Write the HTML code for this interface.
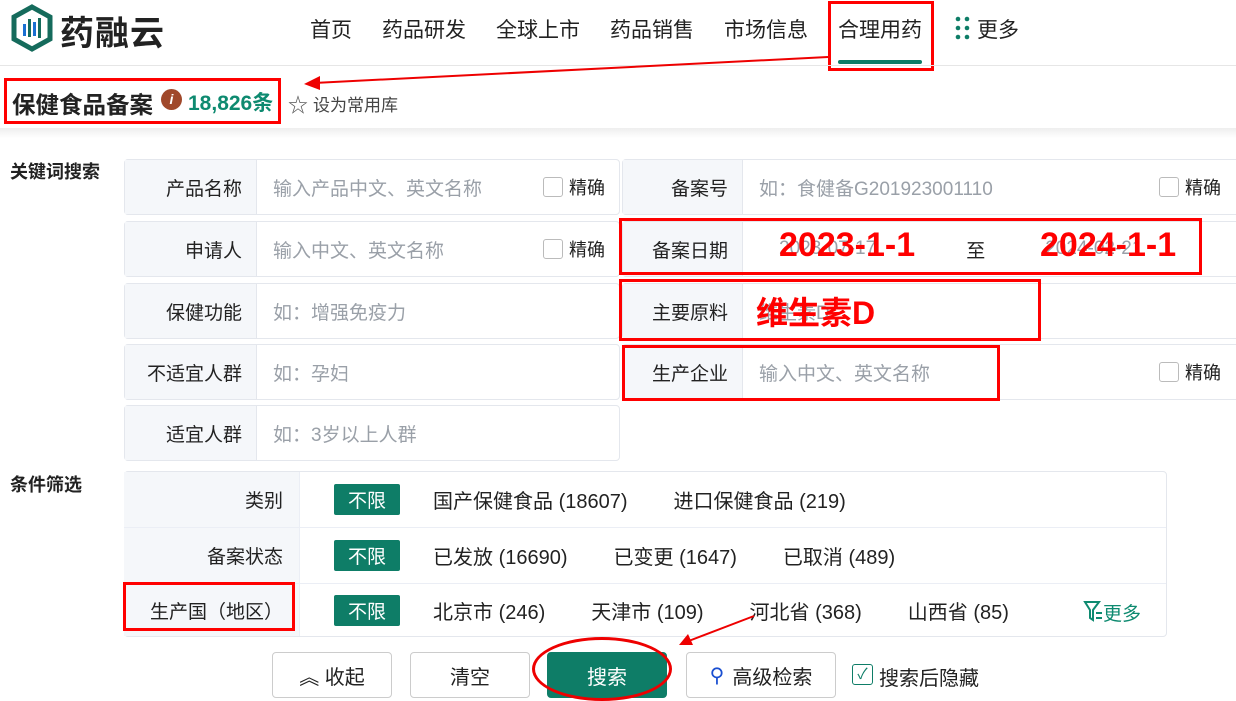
<!DOCTYPE html>
<html><head><meta charset="utf-8"><style>
*{margin:0;padding:0;box-sizing:border-box}
body{width:1236px;height:698px;overflow:hidden;background:#fff;font-family:"Liberation Sans","Noto Sans CJK SC",sans-serif;color:#222;position:relative}
.a{position:absolute}
.nav{font-size:21px;color:#222;top:14px}
.lbl{background:#f5f7fa;border-right:1px solid #e4e7ed;text-align:right;padding-right:14px;font-size:19px;display:flex;align-items:center;justify-content:flex-end}
.row{position:absolute;border:1px solid #e4e7ed;border-radius:4px;display:flex;background:#fff}
.ph{color:#9aa0a8;font-size:19px;padding-left:16px;display:flex;align-items:center;flex:1}
.chk{display:flex;align-items:center;font-size:18px;padding-right:14px}
.chk i{display:inline-block;width:20px;height:20px;border:1px solid #bbb;border-radius:3px;margin-right:6px}
.red{position:absolute;border:3px solid #f00}
.frow{position:absolute;left:124px;width:1042px;display:flex;border-bottom:1px solid #ebeef5}
.flbl{width:176px;background:#f5f7fa;border-right:1px solid #ebeef5;display:flex;align-items:center;justify-content:flex-end;padding-right:16px;font-size:19px}
.opts{display:flex;align-items:center;padding-left:34px;font-size:20px;gap:0}
.opts span{margin-right:46px}
.tag{background:#0e7d67;color:#fff;padding:2px 14px;border-radius:2px;margin-right:33px!important;font-size:19px}
.btn{position:absolute;top:652px;height:46px;border:1px solid #ccc;border-radius:4px;display:flex;align-items:center;justify-content:center;font-size:20px;background:#fff}
.big{position:absolute;color:#f00;font-weight:bold;font-size:34px}
</style></head><body>
<svg class="a" style="left:10px;top:4px" width="44" height="48" viewBox="0 0 44 48"><path d="M22 3 L40 13 L40 35 L22 45 L4 35 L4 13 Z" fill="none" stroke="#156b5c" stroke-width="5"/><rect x="13" y="20" width="3" height="12" fill="#1a6fd1"/><rect x="18" y="15" width="3" height="18" fill="#156b5c"/><rect x="23" y="18" width="3" height="14" fill="#1a6fd1"/><rect x="28" y="14" width="3" height="20" fill="#156b5c"/></svg>
<div class="a" style="left:60px;top:6px;font-size:34px;font-weight:bold;color:#222;letter-spacing:1px">药融云</div>
<div class="a nav" style="left:310px">首页</div>
<div class="a nav" style="left:382px">药品研发</div>
<div class="a nav" style="left:496px">全球上市</div>
<div class="a nav" style="left:610px">药品销售</div>
<div class="a nav" style="left:724px">市场信息</div>
<div class="a nav" style="left:838px">合理用药</div>
<div class="a" style="left:838px;top:60px;width:84px;height:4px;background:#0e7d67;border-radius:2px"></div>
<div class="red" style="left:828px;top:1px;width:106px;height:70px"></div>
<svg class="a" style="left:955px;top:16px" width="16" height="24"><g fill="#0e7d67"><circle cx="3" cy="3" r="2.3"/><circle cx="12" cy="3" r="2.3"/><circle cx="3" cy="12" r="2.3"/><circle cx="12" cy="12" r="2.3"/><circle cx="3" cy="21" r="2.3"/><circle cx="12" cy="21" r="2.3"/></g></svg>
<div class="a nav" style="left:977px">更多</div>
<div class="a" style="left:0;top:65px;width:1236px;height:1px;background:#e6e6e6"></div>
<svg class="a" style="left:300px;top:50px" width="530" height="45"><line x1="528" y1="7" x2="14" y2="33" stroke="#e00" stroke-width="2"/><path d="M4 34 L20 26 L20 40 Z" fill="#e00"/></svg>
<div class="a" style="left:12px;top:86px;font-size:23.5px;font-weight:bold">保健食品备案</div>
<div class="a" style="left:161px;top:89px;width:21px;height:21px;border-radius:50%;background:#a0482a;color:#fff;font-size:14px;font-weight:bold;text-align:center;line-height:21px;font-style:italic">i</div>
<div class="a" style="left:188px;top:87px;font-size:21px;font-weight:bold;color:#0e8a70">18,826条</div>
<div class="red" style="left:4px;top:78px;width:277px;height:46px"></div>
<div class="a" style="left:288px;top:89px;font-size:20px;color:#555">☆</div>
<div class="a" style="left:313px;top:91px;font-size:17px;color:#444">设为常用库</div>
<div class="a" style="left:0;top:128px;width:1236px;height:10px;background:linear-gradient(#eee,#fff)"></div>
<div class="a" style="left:10px;top:158px;font-size:18px;font-weight:bold">关键词搜索</div>
<div class="row" style="left:124px;top:159px;width:496px;height:56px"><div class="lbl" style="width:132px">产品名称</div><div class="ph">输入产品中文、英文名称</div><div class="chk"><i></i>精确</div></div>
<div class="row" style="left:124px;top:221px;width:496px;height:56px"><div class="lbl" style="width:132px">申请人</div><div class="ph">输入中文、英文名称</div><div class="chk"><i></i>精确</div></div>
<div class="row" style="left:124px;top:283px;width:496px;height:56px"><div class="lbl" style="width:132px">保健功能</div><div class="ph">如：增强免疫力</div></div>
<div class="row" style="left:124px;top:344px;width:496px;height:56px"><div class="lbl" style="width:132px">不适宜人群</div><div class="ph">如：孕妇</div></div>
<div class="row" style="left:124px;top:405px;width:496px;height:56px"><div class="lbl" style="width:132px">适宜人群</div><div class="ph">如：3岁以上人群</div></div>
<div class="row" style="left:622px;top:159px;width:630px;height:56px"><div class="lbl" style="width:120px">备案号</div><div class="ph">如：食健备G201923001110</div><div class="chk" style="padding-right:30px"><i></i>精确</div></div>
<div class="row" style="left:622px;top:221px;width:630px;height:56px"><div class="lbl" style="width:120px">备案日期</div><div class="ph"><span style="margin-left:20px">2023-07-17</span><span style="margin-left:90px;color:#222">至</span><span style="margin-left:60px">2024-02-21</span></div></div>
<div class="row" style="left:622px;top:283px;width:630px;height:56px"><div class="lbl" style="width:120px">主要原料</div><div class="ph">维生素D</div></div>
<div class="row" style="left:622px;top:344px;width:630px;height:56px"><div class="lbl" style="width:120px">生产企业</div><div class="ph">输入中文、英文名称</div><div class="chk" style="padding-right:30px"><i></i>精确</div></div>
<div class="red" style="left:619px;top:218px;width:583px;height:57px"></div>
<div class="red" style="left:619px;top:279px;width:422px;height:62px"></div>
<div class="red" style="left:622px;top:345px;width:378px;height:56px"></div>
<div class="big" style="left:779px;top:226px">2023-1-1</div>
<div class="big" style="left:1040px;top:226px">2024-1-1</div>
<div class="big" style="left:756px;top:288px;font-size:32px">维生素D</div>
<div class="a" style="left:10px;top:471px;font-size:18px;font-weight:bold">条件筛选</div>
<div class="a" style="left:124px;top:471px;width:1043px;height:166px;border:1px solid #e4e7ed;border-radius:4px"></div>
<div class="frow" style="top:472px;height:56px"><div class="flbl">类别</div><div class="opts"><span class="tag">不限</span><span>国产保健食品 (18607)</span><span>进口保健食品 (219)</span></div></div>
<div class="frow" style="top:528px;height:56px"><div class="flbl">备案状态</div><div class="opts"><span class="tag">不限</span><span>已发放 (16690)</span><span>已变更 (1647)</span><span>已取消 (489)</span></div></div>
<div class="frow" style="top:584px;height:52px;border:none"><div class="flbl">生产国（地区）</div><div class="opts"><span class="tag">不限</span><span>北京市 (246)</span><span>天津市 (109)</span><span>河北省 (368)</span><span>山西省 (85)</span></div></div>
<svg class="a" style="left:1083px;top:600px" width="20" height="24"><path d="M2 2 H16 L10 10 V20 L7 18 V10 Z" fill="none" stroke="#0e8a70" stroke-width="2"/><line x1="13" y1="13" x2="19" y2="13" stroke="#0e8a70" stroke-width="2"/><line x1="13" y1="18" x2="19" y2="18" stroke="#0e8a70" stroke-width="2"/></svg>
<div class="a" style="left:1103px;top:599px;font-size:19px;color:#0e8a70">更多</div>
<div class="red" style="left:123px;top:582px;width:172px;height:49px"></div>
<svg class="a" style="left:676px;top:614px" width="80" height="34"><line x1="78" y1="2" x2="10" y2="28" stroke="#e00" stroke-width="2"/><path d="M3 31 L12 20 L17 31 Z" fill="#e00"/></svg>
<div class="btn" style="left:272px;width:120px">︽ 收起</div>
<div class="btn" style="left:410px;width:120px">清空</div>
<div class="btn" style="left:547px;width:120px;background:#0e7d67;color:#fff;border-color:#0e7d67">搜索</div>
<div class="a" style="left:532px;top:637px;width:140px;height:64px;border:3px solid #e00;border-radius:50%"></div>
<div class="btn" style="left:686px;width:150px"><span style="color:#1a4fd1;margin-right:8px">⚲</span>高级检索</div>
<div class="a" style="left:852px;top:664px;width:21px;height:21px;border:1px solid #0e7d67;border-radius:3px;color:#0e7d67;font-size:15px;text-align:center;line-height:19px">✓</div>
<div class="a" style="left:879px;top:662px;font-size:20px">搜索后隐藏</div>
</body></html>
